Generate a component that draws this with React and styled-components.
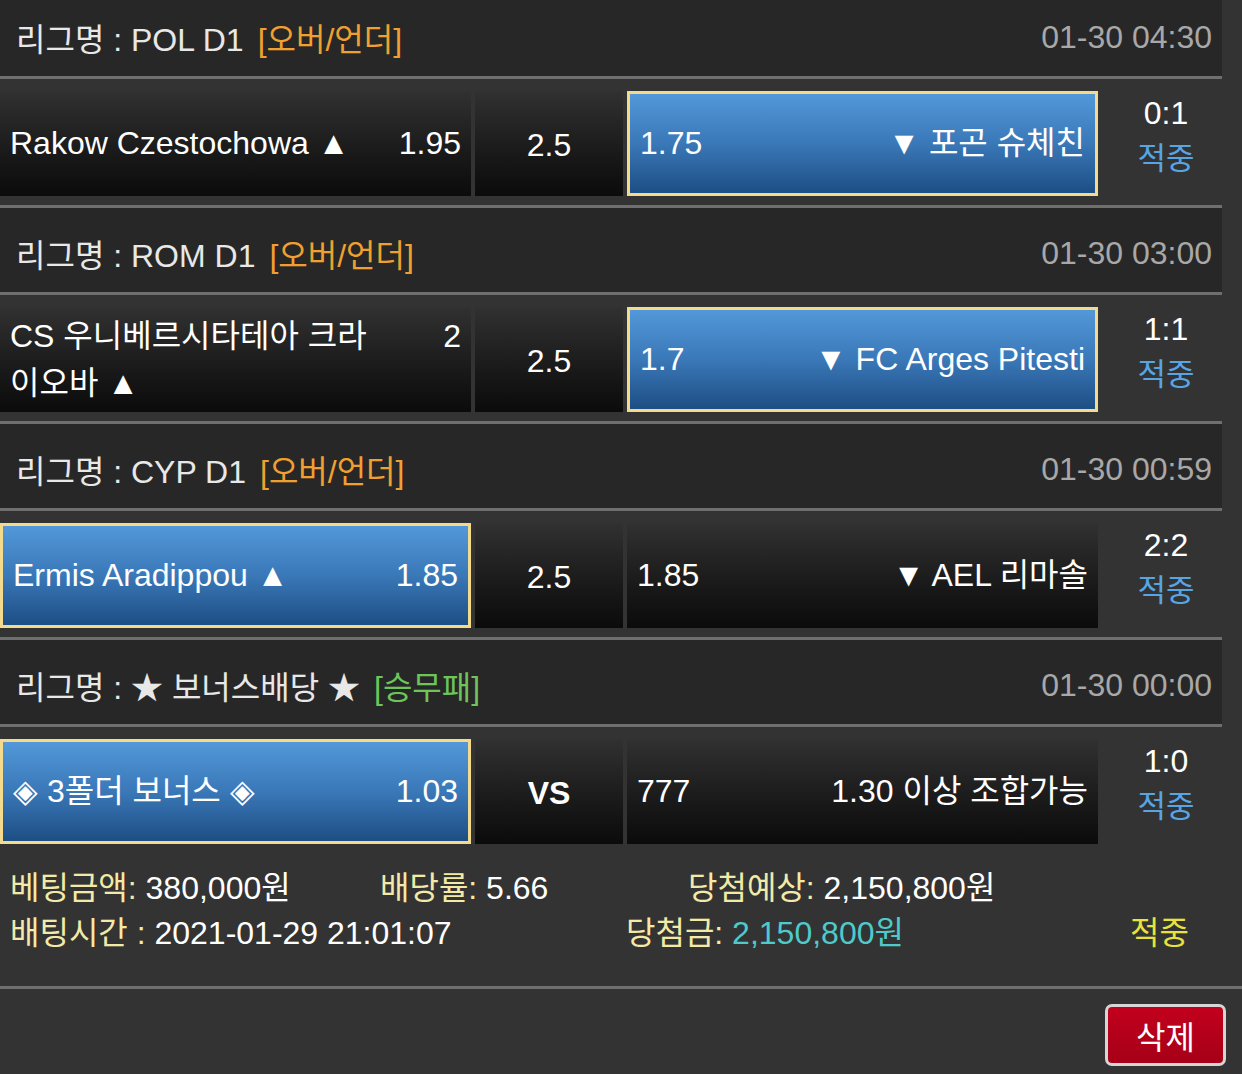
import styled, { createGlobalStyle } from "styled-components";

const GlobalStyle = createGlobalStyle`
  body {
    margin: 0;
    background-color: #333333;
    font-family: "Liberation Sans", "Noto Sans CJK KR", sans-serif;
    color: #ffffff;
  }
`;

const Page = styled.div`
  width: 1242px;
  margin-top: -8px;
`;

const List = styled.div`
  width: 1222px;
`;

const LeagueHeader = styled.div`
  display: flex;
  justify-content: space-between;
  align-items: center;
  height: 87px;
  padding: 6px 10px 0 16px;
  box-sizing: border-box;
  background-color: #272727;
  border-bottom: 3px solid #6f6f6f;
  font-size: 32px;
`;

const LeagueName = styled.div`
  color: #e8e8e8;
`;

const BetType = styled.span`
  margin-left: 14px;
  color: ${(p) => p.$color};
`;

const Time = styled.div`
  color: #a8a8a8;
`;

const MatchRow = styled.div`
  display: grid;
  grid-template-columns: 471px 148px 471px 120px;
  column-gap: 4px;
  padding: 12px 0 9px;
  border-bottom: ${(p) => (p.$last ? "none" : "3px solid #6f6f6f")};
  font-size: 32px;
`;

const Cell = styled.div`
  display: flex;
  align-items: center;
  height: 105px;
  box-sizing: border-box;
  padding: 0 10px;
  background: ${(p) =>
    p.$picked
      ? "linear-gradient(to bottom, #5398d9 0%, #3a78b8 50%, #1d4e84 100%)"
      : "linear-gradient(to bottom, #313131 0%, #1b1b1b 55%, #0b0b0b 100%)"};
  border: ${(p) => (p.$picked ? "3px solid #f4da8c" : "none")};
`;

const TeamLine = styled.div`
  display: flex;
  align-items: flex-start;
  width: 100%;
  line-height: 47px;
`;

const TeamName = styled.div`
  flex: 1;
  text-align: ${(p) => (p.$right ? "right" : "left")};
`;

const Odds = styled.div`
  flex: none;
  width: ${(p) => (p.$left ? "auto" : "80px")};
  text-align: ${(p) => (p.$left ? "left" : "right")};
`;

const LineCell = styled(Cell)`
  justify-content: center;
  padding-top: 4px;
  font-weight: ${(p) => (p.$bold ? 700 : 400)};
`;

const ScoreCell = styled.div`
  display: flex;
  flex-direction: column;
  align-items: center;
  padding-left: 8px;
  line-height: 45px;
`;

const Result = styled.div`
  color: #58a5e4;
  font-size: 31px;
`;

const Footer = styled.div`
  padding: 13px 0 30px 10px;
  border-bottom: 3px solid #6f6f6f;
  font-size: 32px;
  line-height: 45px;
`;

const FooterLine = styled.div`
  display: flex;
`;

const FooterItem = styled.div`
  flex: none;
  width: ${(p) => p.$w || "auto"};
  white-space: nowrap;
`;

const Label = styled.span`
  color: ${(p) => p.$color || "#f3eaa8"};
`;

const Value = styled.span`
  color: ${(p) => p.$color || "#ffffff"};
`;

const ButtonBar = styled.div`
  display: flex;
  justify-content: flex-end;
  padding: 15px 16px 0 0;
`;

const DeleteButton = styled.button`
  width: 121px;
  height: 62px;
  border: 3px solid #d6d6d6;
  border-radius: 7px;
  background: linear-gradient(to bottom, #c2001d 0%, #a60018 100%);
  color: #ffffff;
  font-family: "Liberation Sans", "Noto Sans CJK KR", sans-serif;
  font-size: 32px;
  padding: 0;
`;

const ORANGE = "#f0a030";
const GREEN = "#6cc45a";

const matches = [
  {
    league: "POL D1",
    type: "[오버/언더]",
    typeColor: ORANGE,
    time: "01-30 04:30",
    home: "Rakow Czestochowa ▲",
    homeOdds: "1.95",
    line: "2.5",
    awayOdds: "1.75",
    away: "▼ 포곤 슈체친",
    pick: "away",
    score: "0:1",
  },
  {
    league: "ROM D1",
    type: "[오버/언더]",
    typeColor: ORANGE,
    time: "01-30 03:00",
    home: "CS 우니베르시타테아 크라이오바 ▲",
    homeOdds: "2",
    line: "2.5",
    awayOdds: "1.7",
    away: "▼ FC Arges Pitesti",
    pick: "away",
    score: "1:1",
  },
  {
    league: "CYP D1",
    type: "[오버/언더]",
    typeColor: ORANGE,
    time: "01-30 00:59",
    home: "Ermis Aradippou ▲",
    homeOdds: "1.85",
    line: "2.5",
    awayOdds: "1.85",
    away: "▼ AEL 리마솔",
    pick: "home",
    score: "2:2",
  },
  {
    league: "★ 보너스배당 ★",
    type: "[승무패]",
    typeColor: GREEN,
    time: "01-30 00:00",
    home: "◈ 3폴더 보너스 ◈",
    homeOdds: "1.03",
    line: "VS",
    bold: true,
    awayOdds: "777",
    away: "1.30 이상 조합가능",
    pick: "home",
    score: "1:0",
  },
];

function Match({ m, last }) {
  return (
    <>
      <LeagueHeader>
        <LeagueName>
          리그명 : {m.league}
          <BetType $color={m.typeColor}>{m.type}</BetType>
        </LeagueName>
        <Time>{m.time}</Time>
      </LeagueHeader>
      <MatchRow $last={last}>
        <Cell $picked={m.pick === "home"}>
          <TeamLine>
            <TeamName>{m.home}</TeamName>
            <Odds>{m.homeOdds}</Odds>
          </TeamLine>
        </Cell>
        <LineCell $bold={m.bold}>{m.line}</LineCell>
        <Cell $picked={m.pick === "away"}>
          <TeamLine>
            <Odds $left>{m.awayOdds}</Odds>
            <TeamName $right>{m.away}</TeamName>
          </TeamLine>
        </Cell>
        <ScoreCell>
          <div>{m.score}</div>
          <Result>적중</Result>
        </ScoreCell>
      </MatchRow>
    </>
  );
}

export default function App() {
  return (
    <>
      <GlobalStyle />
      <Page>
        <List>
          {matches.map((m, i) => (
            <Match key={m.time} m={m} last={i === matches.length - 1} />
          ))}
        </List>
        <Footer>
          <FooterLine>
            <FooterItem $w="370px">
              <Label>베팅금액:</Label> <Value>380,000원</Value>
            </FooterItem>
            <FooterItem $w="308px">
              <Label>배당률:</Label> <Value>5.66</Value>
            </FooterItem>
            <FooterItem>
              <Label>당첨예상:</Label> <Value>2,150,800원</Value>
            </FooterItem>
          </FooterLine>
          <FooterLine>
            <FooterItem $w="616px">
              <Label>배팅시간 :</Label> <Value>2021-01-29 21:01:07</Value>
            </FooterItem>
            <FooterItem $w="504px">
              <Label>당첨금:</Label> <Value $color="#4fcaca">2,150,800원</Value>
            </FooterItem>
            <FooterItem>
              <Label $color="#e8e23c">적중</Label>
            </FooterItem>
          </FooterLine>
        </Footer>
        <ButtonBar>
          <DeleteButton>삭제</DeleteButton>
        </ButtonBar>
      </Page>
    </>
  );
}
